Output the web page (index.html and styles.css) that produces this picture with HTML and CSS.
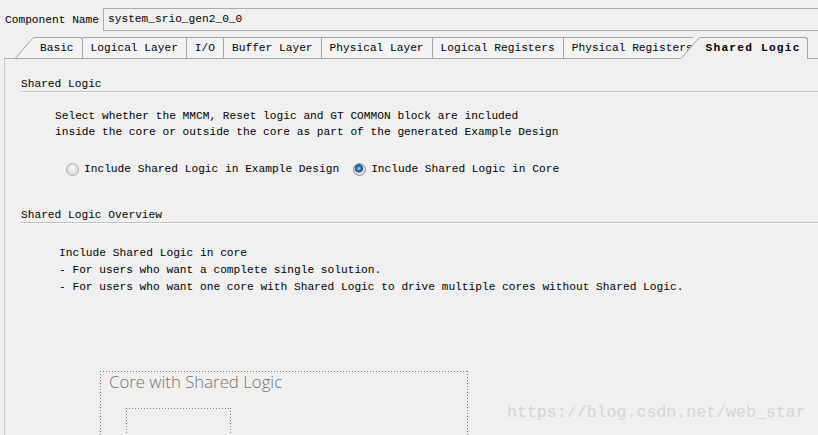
FILE: index.html
```html
<!DOCTYPE html>
<html>
<head>
<meta charset="utf-8">
<link rel="stylesheet" href="styles.css">
</head>
<body>
<div class="name-row">
  <span class="name-label">Component Name</span>
  <div class="name-input">system_srio_gen2_0_0</div>
</div>
<div class="tabs-wrap">
  <div class="tabs">
    <svg class="slant" width="20" height="21" viewBox="0 0 20 21"><path d="M0 21 L17 2 Q18.5 0.5 20 0.5 L20 21 Z" fill="#f3f3f3"/><path d="M0.5 21 L17 2 Q18.5 0.5 20 0.5" fill="none" stroke="#a3a3a3"/></svg>
    <div class="tab tab-first">Basic</div>
    <div class="tab">Logical Layer</div>
    <div class="tab">I/O</div>
    <div class="tab">Buffer Layer</div>
    <div class="tab">Physical Layer</div>
    <div class="tab">Logical Registers</div>
    <div class="tab tab-under">Physical Registers</div>
    <div class="tab-active">
      <svg class="slant" width="20" height="22" viewBox="0 0 20 22"><path d="M0 21 L17 2 Q18.5 0.5 20 0.5 L20 22 L0 22 Z" fill="#f0f0f0"/><path d="M0.5 21 L17 2 Q18.5 0.5 20 0.5" fill="none" stroke="#a3a3a3"/></svg>
      <div class="tab-active-label">Shared Logic</div>
    </div>
  </div>
  <div class="panel">
    <div class="section-heading">Shared Logic</div>
    <div class="desc">
      <div>Select whether the MMCM, Reset logic and GT COMMON block are included</div>
      <div>inside the core or outside the core as part of the generated Example Design</div>
    </div>
    <div class="radios">
      <span class="radio"></span><span class="radio-text">Include Shared Logic in Example Design</span>
      <span class="radio radio-on"></span><span class="radio-text">Include Shared Logic in Core</span>
    </div>
    <div class="section-heading heading-overview">Shared Logic Overview</div>
    <div class="overview">
      <div>Include Shared Logic in core</div>
      <div>- For users who want a complete single solution.</div>
      <div>- For users who want one core with Shared Logic to drive multiple cores without Shared Logic.</div>
    </div>
    <div class="diagram">
      <div class="diagram-title">Core with Shared Logic</div>
      <div class="diagram-inner"></div>
    </div>
  </div>
</div>
<div class="watermark">https://blog.csdn.net/web_star</div>
</body>
</html>
```

FILE: styles.css
```css
html, body {
  margin: 0;
  padding: 0;
  height: 435px;
  overflow: hidden;
}
body {
  position: relative;
  background: #f0f0f0;
  color: #000;
  font-family: "Liberation Mono", "DejaVu Sans Mono", monospace;
  font-size: 11.2px;
}
.name-row {
  display: flex;
  align-items: center;
  padding: 8px 0 0 5px;
  height: 23px;
}
.name-label {
  white-space: nowrap;
}
.name-input {
  flex: 1;
  margin-left: 4px;
  margin-right: -4px;
  height: 23px;
  box-sizing: border-box;
  border: 1px solid #adadad;
  background: #f0f0f0;
  line-height: 21px;
  padding-left: 4px;
}
.tabs-wrap {
  margin: 6px 0 0 4px;
}
.tabs {
  display: flex;
  align-items: flex-end;
  padding-left: 11px;
  height: 21px;
}
.slant {
  display: block;
  flex: none;
}
.tab {
  height: 21px;
  box-sizing: border-box;
  border-top: 1px solid #a3a3a3;
  border-right: 1px solid #a3a3a3;
  background: #f3f3f3;
  line-height: 20px;
  padding: 0 8px 0 8px;
  white-space: nowrap;
}
.tab-first {
  padding-left: 5px;
  border-top-right-radius: 3px;
}
.tab-under {
  border-right: none;
  padding-right: 0;
}
.tab-active {
  display: flex;
  align-items: flex-end;
  margin-left: -12px;
  margin-bottom: -1px;
  position: relative;
  z-index: 1;
}
.tab-active-label {
  height: 22px;
  box-sizing: border-box;
  border-top: 1px solid #a3a3a3;
  border-right: 1px solid #a3a3a3;
  border-top-right-radius: 3px;
  background: #f0f0f0;
  line-height: 20px;
  padding: 0 6px 0 5px;
  font-weight: bold;
  letter-spacing: 1.2px;
  white-space: nowrap;
}
.panel {
  background: #f0f0f0;
  border-top: 1px solid #a8a8a8;
  border-left: 1px solid #cacaca;
  padding-top: 18px;
  height: 358px;
  overflow: hidden;
}
.section-heading {
  margin-left: 15px;
  padding-left: 1px;
  line-height: 14px;
  border-bottom: 1px solid #c4c4c4;
  box-shadow: 0 1px 0 #fbfbfb;
}
.desc {
  margin: 16px 0 0 50px;
  line-height: 16px;
}
.radios {
  display: flex;
  align-items: center;
  margin: 21px 0 0 61px;
  height: 16px;
}
.radio {
  width: 13px;
  height: 13px;
  box-sizing: border-box;
  border-radius: 50%;
  border: 1px solid #a9a9a9;
  background: radial-gradient(circle at 50% 40%, #fbfbfb 0, #e6e6e6 45%, #cfcfcf 100%);
  flex: none;
}
.radio-on {
  border-color: #8e8e8e;
  background:
    radial-gradient(circle at 45% 40%, #bfe6ff 0, #3f8fd6 1.6px, #1b5c9e 3.2px, #30506e 3.9px, transparent 4.4px),
    radial-gradient(circle at 50% 40%, #fbfbfb 0, #e6e6e6 45%, #cfcfcf 100%);
}
.radio-text {
  margin-left: 5px;
  margin-right: 14px;
  white-space: nowrap;
}
.heading-overview {
  margin-top: 31px;
}
.overview {
  margin: 22px 0 0 54px;
  line-height: 17px;
}
.diagram {
  margin: 75px 0 0 95px;
  width: 368px;
  height: 64px;
  box-sizing: border-box;
  padding: 1px 0 0 9px;
  background:
    repeating-linear-gradient(to right, #7a7a7a 0 1px, transparent 1px 3px) left top / 100% 1px no-repeat,
    repeating-linear-gradient(to bottom, #7a7a7a 0 1px, transparent 1px 3px) left top / 1px 100% no-repeat,
    repeating-linear-gradient(to bottom, #7a7a7a 0 1px, transparent 1px 3px) right top / 1px 100% no-repeat;
}
.diagram-title {
  font-family: "Open Sans", "Liberation Sans", sans-serif;
  font-size: 16.8px;
  font-weight: 300;
  line-height: 20px;
  color: #707070;
}
.diagram-inner {
  margin: 16px 0 0 17px;
  width: 105px;
  height: 26px;
  background:
    repeating-linear-gradient(to right, #7a7a7a 0 1px, transparent 1px 3px) left top / 100% 1px no-repeat,
    repeating-linear-gradient(to bottom, #7a7a7a 0 1px, transparent 1px 3px) left top / 1px 100% no-repeat,
    repeating-linear-gradient(to bottom, #7a7a7a 0 1px, transparent 1px 3px) right top / 1px 100% no-repeat;
}
.watermark {
  position: absolute;
  left: 507px;
  top: 403px;
  font-family: "Liberation Mono", monospace;
  font-size: 16.6px;
  line-height: 20px;
  color: #d5d5d2;
  white-space: nowrap;
}
```
